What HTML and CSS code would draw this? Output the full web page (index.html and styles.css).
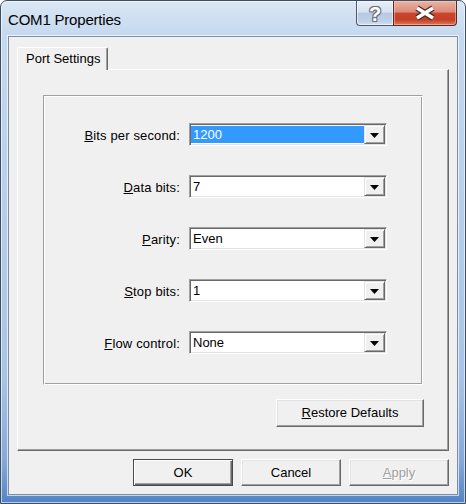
FILE: index.html
```html
<!DOCTYPE html>
<html>
<head>
<meta charset="utf-8">
<link rel="stylesheet" href="styles.css">
</head>
<body>
<div class="window">
  <div class="titlebar">
    <div class="title">COM1 Properties</div>
    <div class="caption-buttons">
      <div class="cbtn help"><span>?</span></div>
      <div class="cbtn close">
        <svg width="28" height="16" viewBox="0 0 28 16">
          <path d="M6 3 L22 13 M22 3 L6 13" stroke="#3e2a26" stroke-width="6" fill="none"/>
          <path d="M6 3 L22 13 M22 3 L6 13" stroke="#ffffff" stroke-width="3.6" fill="none"/>
        </svg>
      </div>
    </div>
  </div>
  <div class="client">
    <div class="tabs"><div class="tab">Port Settings</div></div>
    <div class="panel">
      <div class="group">
        <div class="label"><u>B</u>its per second:</div>
        <div class="combo"><div class="value selected">1200</div><div class="drop"><svg width="9" height="5" viewBox="0 0 9 5"><path d="M0 0H9L4.5 5Z" fill="#000"/></svg></div></div>
        <div class="label"><u>D</u>ata bits:</div>
        <div class="combo"><div class="value">7</div><div class="drop"><svg width="9" height="5" viewBox="0 0 9 5"><path d="M0 0H9L4.5 5Z" fill="#000"/></svg></div></div>
        <div class="label"><u>P</u>arity:</div>
        <div class="combo"><div class="value">Even</div><div class="drop"><svg width="9" height="5" viewBox="0 0 9 5"><path d="M0 0H9L4.5 5Z" fill="#000"/></svg></div></div>
        <div class="label"><u>S</u>top bits:</div>
        <div class="combo"><div class="value">1</div><div class="drop"><svg width="9" height="5" viewBox="0 0 9 5"><path d="M0 0H9L4.5 5Z" fill="#000"/></svg></div></div>
        <div class="label"><u>F</u>low control:</div>
        <div class="combo"><div class="value">None</div><div class="drop"><svg width="9" height="5" viewBox="0 0 9 5"><path d="M0 0H9L4.5 5Z" fill="#000"/></svg></div></div>
      </div>
      <div class="btn restore"><u>R</u>estore Defaults</div>
    </div>
    <div class="actions">
      <div class="btn default">OK</div>
      <div class="btn">Cancel</div>
      <div class="btn disabled"><u>A</u>pply</div>
    </div>
  </div>
</div>
</body>
</html>
```

FILE: styles.css
```css
html, body {
  margin: 0;
  padding: 0;
  background: #ffffff;
}

body {
  font-family: "Liberation Sans", Arial, sans-serif;
  font-size: 13px;
  color: #000;
}

.window {
  width: 466px;
  height: 504px;
  box-sizing: border-box;
  border: 1px solid #3d4d62;
  border-radius: 7px 7px 0 0;
  background: linear-gradient(to bottom, #dae7f5 0px, #c5d9ef 34px, #b8cfea 200px, #a7c3e6 380px, #86a9d9 460px, #5585c6 500px);
  box-shadow: inset 0 0 0 1px rgba(255, 255, 255, 0.6);
  display: flex;
  flex-direction: column;
  overflow: hidden;
}

.titlebar {
  height: 35px;
  flex: none;
  display: flex;
  justify-content: space-between;
  align-items: flex-start;
  padding: 0 8px 0 7px;
}

.title {
  padding-top: 10px;
  font-size: 15px;
  line-height: 18px;
  letter-spacing: -0.2px;
  color: #000;
}

.caption-buttons {
  display: flex;
  height: 25px;
}

.cbtn {
  box-sizing: border-box;
  height: 25px;
  display: flex;
  align-items: center;
  justify-content: center;
  border: 1px solid #4b5a6e;
  border-top: none;
}

.help {
  width: 37px;
  border-right: none;
  border-radius: 0 0 0 4px;
  background: linear-gradient(to bottom, #e8eff8 0%, #d6e2f0 45%, #b6c9e0 52%, #bed1e8 85%, #d3e2f3 100%);
  box-shadow: inset 0 0 0 1px rgba(255, 255, 255, 0.55);
}

.help span {
  font-weight: bold;
  font-size: 20px;
  line-height: 20px;
  color: #fff;
  margin-top: 1px;
  text-shadow: 1px 0 0 #6a737e, -1px 0 0 #6a737e, 0 1px 0 #6a737e, 0 -1px 0 #6a737e,
    1px 1px 0 #6a737e, -1px -1px 0 #6a737e, 1px -1px 0 #6a737e, -1px 1px 0 #6a737e;
}

.close {
  width: 64px;
  border-color: #5b2a1f;
  border-radius: 0 0 4px 0;
  background: linear-gradient(to bottom, #eab3a5 0%, #dd8b78 45%, #c9462d 52%, #c43f26 78%, #dc7a5c 100%);
  box-shadow: inset 0 0 0 1px rgba(255, 220, 210, 0.45);
}

.client {
  flex: none;
  height: 459px;
  margin: 0 7px;
  box-sizing: border-box;
  border: 1px solid #7d8ea4;
  box-shadow: 0 0 0 1px rgba(255, 255, 255, 0.65);
  background: #f0f0f0;
  padding: 10px 8px 8px 8px;
  display: flex;
  flex-direction: column;
}

.tabs {
  display: flex;
  height: 22px;
  position: relative;
  z-index: 1;
}

.tab {
  box-sizing: border-box;
  height: 23px;
  width: 91px;
  padding: 3px 0 0 8px;
  line-height: 15px;
  background: #f0f0f0;
  border-top: 1px solid #fff;
  border-left: 1px solid #fff;
  border-right: 1px solid #696969;
  border-radius: 2px 2px 0 0;
  box-shadow: inset -1px 0 0 #a0a0a0;
}

.panel {
  box-sizing: border-box;
  height: 382px;
  border-top: 1px solid #fff;
  border-left: 1px solid #fff;
  border-right: 1px solid #696969;
  border-bottom: 1px solid #696969;
  box-shadow: inset -1px -1px 0 #a0a0a0;
  padding: 25px 24px 0 25px;
  display: flex;
  flex-direction: column;
}

.group {
  box-sizing: border-box;
  width: 380px;
  height: 290px;
  border: 1px solid;
  border-color: #a0a0a0 #fff #fff #a0a0a0;
  box-shadow: inset 1px 1px 0 #fff, inset -1px -1px 0 #a0a0a0;
  padding-top: 27px;
  display: grid;
  grid-template-columns: 136px 198px;
  grid-auto-rows: 23px;
  column-gap: 9px;
  row-gap: 29px;
  align-content: start;
}

.label {
  text-align: right;
  align-self: center;
  line-height: 15px;
  padding-top: 1px;
  letter-spacing: 0.15px;
}

.combo {
  box-sizing: border-box;
  height: 23px;
  border: 1px solid;
  border-color: #a0a0a0 #fff #fff #a0a0a0;
  box-shadow: inset 1px 1px 0 #696969, inset -1px -1px 0 #e3e3e3;
  background: #fff;
  padding: 1px;
  display: flex;
}

.value {
  flex: 1;
  padding: 1px 0 0 2px;
  line-height: 17px;
  color: #000;
}

.value.selected {
  background: #3399ff;
  color: #fff;
  margin: 1px 0;
  padding-top: 0;
  line-height: 17px;
}

.drop {
  box-sizing: border-box;
  width: 21px;
  height: 19px;
  background: #f0f0f0;
  border: 1px solid;
  border-color: #e3e3e3 #696969 #696969 #e3e3e3;
  box-shadow: inset 1px 1px 0 #fff, inset -1px -1px 0 #a0a0a0;
  display: flex;
  align-items: center;
  justify-content: center;
}

.drop svg {
  display: block;
  margin-top: 1px;
}

.btn {
  box-sizing: border-box;
  width: 100px;
  height: 27px;
  background: #f0f0f0;
  border: 1px solid;
  border-color: #fff #696969 #696969 #fff;
  box-shadow: inset -1px -1px 0 #a0a0a0, inset 1px 1px 0 #e3e3e3;
  display: flex;
  align-items: center;
  justify-content: center;
  line-height: 15px;
  color: #000;
}

.restore {
  width: 148px;
  height: 28px;
  margin-top: 14px;
  align-self: flex-end;
  padding-bottom: 1px;
}

.actions {
  margin-top: 8px;
  display: flex;
  justify-content: flex-end;
  gap: 8px;
}

.btn.default {
  border: 1px solid #4a4a4a;
  box-shadow: inset 1px 1px 0 #fff, inset -1px -1px 0 #696969, inset -2px -2px 0 #a0a0a0;
}

.btn.disabled {
  color: #a0a0a0;
  text-shadow: 1px 1px 0 #fff;
}
```
